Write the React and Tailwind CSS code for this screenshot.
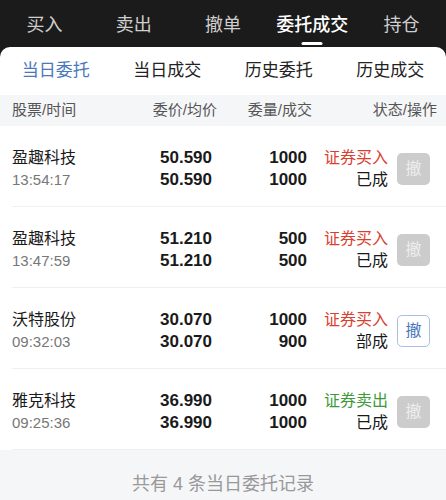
import React from "react";

const TOP_TABS = ["买入", "卖出", "撤单", "委托成交", "持仓"];
const SUB_TABS = ["当日委托", "当日成交", "历史委托", "历史成交"];

const ORDERS = [
  { name: "盈趣科技", time: "13:54:17", price: "50.590", avg: "50.590", qty: "1000", done: "1000", side: "证券买入", buy: true, status: "已成", cancel: false },
  { name: "盈趣科技", time: "13:47:59", price: "51.210", avg: "51.210", qty: "500", done: "500", side: "证券买入", buy: true, status: "已成", cancel: false },
  { name: "沃特股份", time: "09:32:03", price: "30.070", avg: "30.070", qty: "1000", done: "900", side: "证券买入", buy: true, status: "部成", cancel: true },
  { name: "雅克科技", time: "09:25:36", price: "36.990", avg: "36.990", qty: "1000", done: "1000", side: "证券卖出", buy: false, status: "已成", cancel: false },
];

const font = { fontFamily: '"Liberation Sans", "Noto Sans CJK SC", sans-serif' };

export default function App() {
  return (
    <div className="w-[446px] h-[500px] overflow-hidden bg-[#1b1b1b]" style={font}>
      {/* top tabs */}
      <div className="grid grid-cols-5 h-[47px]">
        {TOP_TABS.map((t, i) => (
          <div key={t} className="relative flex justify-center pt-[13px]">
            <span className={`text-[18px] leading-[24px] ${i === 3 ? "text-white font-medium" : "text-[#cfcfcf]"}`}>{t}</span>
            {i === 3 && <div className="absolute left-1/2 -translate-x-1/2 top-[42px] w-[21px] h-[3px] rounded-full bg-white" />}
          </div>
        ))}
      </div>

      <div className="bg-white rounded-t-[10px] h-[453px] flex flex-col">
        {/* sub tabs */}
        <div className="grid grid-cols-4 h-[48px] items-center">
          {SUB_TABS.map((t, i) => (
            <div key={t} className={`text-center text-[17px] ${i === 0 ? "text-[#4a78bb]" : "text-[#222]"}`}>{t}</div>
          ))}
        </div>

        {/* header */}
        <div className="flex items-center h-[31px] bg-[#f5f6f8] pl-3 pr-[9px] text-[15px] text-[#555] whitespace-nowrap">
          <div className="w-[125px]">股票/时间</div>
          <div className="w-[80px] text-right">委价/均价</div>
          <div className="w-[95px] text-right">委量/成交</div>
          <div className="flex-1 text-right">状态/操作</div>
        </div>

        {/* rows */}
        {ORDERS.map((o, i) => (
          <div key={i} className="ml-3 border-b border-[#f0f0f0] pt-[21px] pb-[15px] flex items-center">
            <div className="w-[120px]">
              <div className="h-[22px] leading-[22px] text-[16px] text-[#1a1a1a]">{o.name}</div>
              <div className="h-[22px] leading-[22px] text-[15px] text-[#777]">{o.time}</div>
            </div>
            <div className="w-[80px] text-right text-[17px] font-bold text-[#1a1a1a]">
              <div className="h-[22px] leading-[22px]">{o.price}</div>
              <div className="h-[22px] leading-[22px]">{o.avg}</div>
            </div>
            <div className="w-[95px] text-right text-[17px] font-bold text-[#1a1a1a]">
              <div className="h-[22px] leading-[22px]">{o.qty}</div>
              <div className="h-[22px] leading-[22px]">{o.done}</div>
            </div>
            <div className="w-[81px] text-right text-[16px]">
              <div className={`h-[22px] leading-[22px] ${o.buy ? "text-[#d8412f]" : "text-[#3e9a38]"}`}>{o.side}</div>
              <div className="h-[22px] leading-[22px] text-[#1a1a1a]">{o.status}</div>
            </div>
            <div className="ml-[9px]">
              {o.cancel ? (
                <div className="w-[33px] h-[32px] rounded-[5px] border border-[#a9c0e0] bg-white flex items-center justify-center text-[16px] text-[#4a78bb]">撤</div>
              ) : (
                <div className="w-[33px] h-[32px] rounded-[5px] bg-[#cccccc] flex items-center justify-center text-[16px] text-[#eeeeee]">撤</div>
              )}
            </div>
          </div>
        ))}

        {/* footer */}
        <div className="flex-1 bg-[#f5f6f8] flex justify-center pt-[22px]">
          <span className="text-[18px] text-[#999] leading-[24px]">共有 4 条当日委托记录</span>
        </div>
      </div>
    </div>
  );
}
